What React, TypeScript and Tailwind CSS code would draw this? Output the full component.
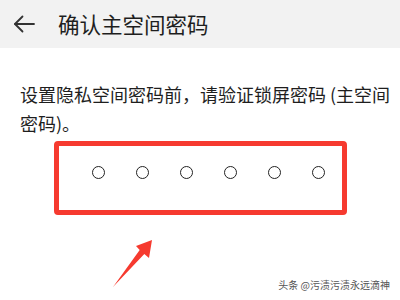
const cjk = { fontFamily: '"Noto Sans CJK SC", "Noto Sans", sans-serif' };

const BackArrow = () => (
  <svg width="22" height="18" viewBox="0 0 22 18" fill="none" stroke="#333" strokeWidth="1.8" strokeLinecap="round" strokeLinejoin="round">
    <path d="M21 9H2" />
    <path d="M9.5 1.5L2 9l7.5 7.5" />
  </svg>
);

export default function App() {
  return (
    <div className="relative w-[400px] h-[300px] overflow-hidden bg-white text-[#1e1e1e]" style={cjk}>
      <header className="flex h-12 items-center bg-[#f2f2f2]">
        <div className="ml-[13px] mr-[23px] flex items-center">
          <BackArrow />
        </div>
        <h1 className="text-[21.5px] leading-none text-[#1e1e1e]">确认主空间密码</h1>
      </header>

      <p className="mt-[32px] pl-5 pr-[6px] text-[18px] leading-[29px] text-[#1e1e1e]">
        设置隐私空间密码前，请验证锁屏密码 (主空间密码)。
      </p>

      <div className="ml-[54px] mt-[3px] h-[74px] w-[293px] rounded-[4px] border-[5px] border-[#f63a2f]">
        <div className="flex gap-[31px] pl-[33px] pt-[20px]">
          {[0, 1, 2, 3, 4, 5].map((i) => (
            <span key={i} className="h-[13px] w-[13px] rounded-full border-[1.6px] border-[#222]" />
          ))}
        </div>
      </div>

      <svg className="absolute left-0 top-0" width="400" height="300" viewBox="0 0 400 300">
        <polygon
          points="113,287 139.7,250.1 136,246 152,240 149,258 144.3,253.9"
          fill="#f63a2f"
        />
      </svg>

      <span
        className="absolute right-[10px] bottom-[10px] text-[10px] leading-none text-[#555]"
        style={{ textShadow: "0 0 2px #fff" }}
      >
        头条 @污渍污渍永远滴神
      </span>
    </div>
  );
}
